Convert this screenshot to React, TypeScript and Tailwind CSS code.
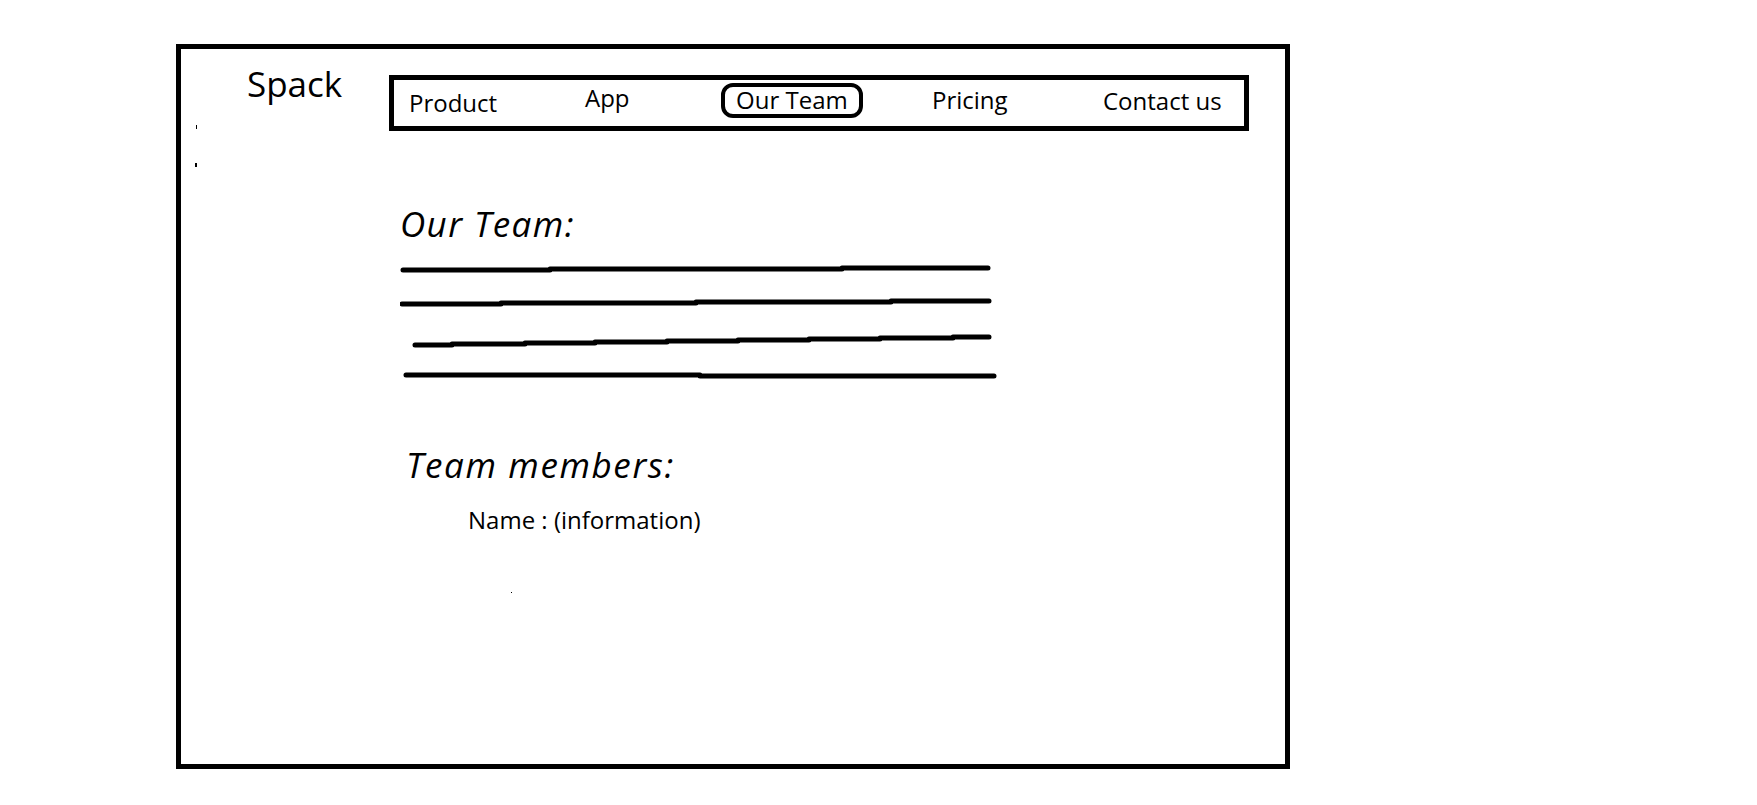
import React from "react";

const navFont = "text-[24px] leading-none text-black whitespace-nowrap";

function SketchLines() {
  return (
    <svg width="600" height="125" viewBox="0 0 600 125" className="block" fill="none" stroke="#000" strokeWidth="5" strokeLinecap="round" strokeLinejoin="round">
      <polyline points="3,10 150,10 150,9 442,9 442,8 588,8" />
      <polyline points="2,44 101,44 101,43 296,43 296,42 491,42 491,41 589,41" />
      <polyline points="15,85 52,85 52,84 125,84 125,83 195,83 195,82 267,82 267,81 338,81 338,80 409,80 409,79 480,79 480,78 553,78 553,77 589,77" />
      <polyline points="6,115 300,115 300,116 594,116" />
    </svg>
  );
}

export default function App() {
  return (
    <div className="w-full h-[805px] bg-white overflow-hidden" style={{ fontFamily: '"Open Sans", "Noto Sans", sans-serif' }}>
      <div className="ml-[176px] mt-[44px] w-[1114px] h-[725px] border-[5px] border-black flex flex-col">
        {/* header */}
        <div className="flex items-start h-[82px]">
          <div className="w-[208px] flex flex-col">
            <div className="ml-[66px] mt-[17px] text-[35px] leading-none text-black">Spack</div>
            <div className="ml-[15px] mt-[24px] w-[1px] h-[4px] bg-black" />
            <div className="ml-[14px] mt-[34px] w-[2px] h-[4px] bg-black" />
          </div>
          <nav className="mt-[26px] w-[860px] h-[56px] border-[5px] border-black flex items-start pl-[15px]">
            <div className="w-[176px] mt-[11px]">
              <span className={navFont}>Product</span>
            </div>
            <div className="w-[136px] mt-[6px]">
              <span className={navFont}>App</span>
            </div>
            <div className="w-[211px] mt-[3px]">
              <div className="w-[142px] h-[35px] border-[4px] border-black rounded-[12px] pl-[11px] pt-[1px]">
                <span className={navFont}>Our Team</span>
              </div>
            </div>
            <div className="w-[171px] mt-[8px]">
              <span className={navFont}>Pricing</span>
            </div>
            <div className="mt-[9px]">
              <span className={navFont}>Contact us</span>
            </div>
          </nav>
        </div>

        {/* content */}
        <div className="ml-[219px] mt-[75px] flex flex-col items-start">
          <h1 className="text-[35px] leading-none italic font-normal tracking-[1.4px] text-black">Our Team:</h1>
          <div className="mt-[19px]">
            <SketchLines />
          </div>
          <h2 className="ml-[6px] mt-[62px] text-[35px] leading-none italic font-normal tracking-[1.6px] text-black">Team members:</h2>
          <p className="ml-[68px] mt-[26px] text-[24px] leading-none text-black">Name : (information)</p>
          <div className="ml-[111px] mt-[60px] w-[1px] h-[1px] bg-black" />
        </div>
      </div>
    </div>
  );
}
